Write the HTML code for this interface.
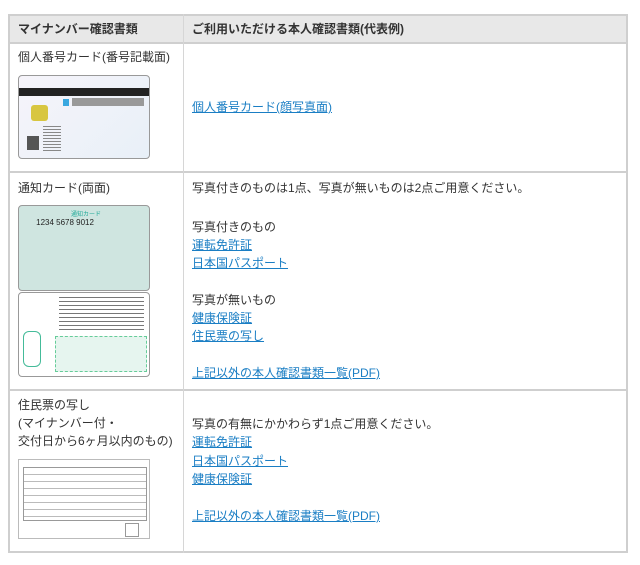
<!DOCTYPE html>
<html><head><meta charset="utf-8"><style>
body{margin:0;width:640px;height:565px;background:#fff;position:relative;font-family:"Liberation Sans","Noto Sans CJK JP",sans-serif;font-size:12px;color:#333;overflow:hidden}
.a{position:absolute}
.h{background:#cfcfcf}
.t{position:absolute;white-space:nowrap;line-height:18px}
a{color:#1a7ec4;text-decoration:underline}
.card{position:absolute;border:1px solid #999;border-radius:4px;box-sizing:border-box}
</style></head><body>
<div class="a" style="left:8px;top:14px;width:620px;height:29px;background:#e8e8e8"></div>
<div class="a h" style="left:8px;top:14px;width:620px;height:2px"></div>
<div class="a h" style="left:8px;top:42px;width:620px;height:2px"></div>
<div class="a h" style="left:8px;top:171px;width:620px;height:2px"></div>
<div class="a h" style="left:8px;top:389px;width:620px;height:2px"></div>
<div class="a h" style="left:8px;top:551px;width:620px;height:2px"></div>
<div class="a h" style="left:8px;top:14px;width:2px;height:539px"></div>
<div class="a h" style="left:626px;top:14px;width:2px;height:539px"></div>
<div class="a" style="left:183px;top:14px;width:1px;height:539px;background:#d6d6d6"></div>

<div class="t" style="left:18px;top:20px;font-weight:bold">マイナンバー確認書類</div>
<div class="t" style="left:192px;top:20px;font-weight:bold">ご利用いただける本人確認書類(代表例)</div>

<div class="t" style="left:18px;top:48px">個人番号カード(番号記載面)</div>
<div class="card" style="left:18px;top:75px;width:132px;height:84px;background:linear-gradient(135deg,#f6f4fa,#e8f0f8)">
 <div class="a" style="left:0;top:12px;width:130px;height:8px;background:#222"></div>
 <div class="a" style="left:12px;top:29px;width:17px;height:16px;background:#d8c640;border-radius:3px"></div>
 <div class="a" style="left:44px;top:23px;width:6px;height:7px;background:#3aa8e0"></div>
 <div class="a" style="left:53px;top:22px;width:72px;height:8px;background:#999"></div>
 <div class="a" style="left:8px;top:60px;width:12px;height:14px;background:#555"></div>
 <div class="a" style="left:24px;top:50px;width:18px;height:26px;background:repeating-linear-gradient(#888 0 1px,transparent 1px 3px)"></div>
</div>
<div class="t" style="left:192px;top:98px"><a>個人番号カード(顔写真面)</a></div>

<div class="t" style="left:18px;top:179px">通知カード(両面)</div>
<div class="card" style="left:18px;top:205px;width:132px;height:86px;background:#cfe5e0">
 <div class="t" style="left:52px;top:0;font-size:6px;color:#2a9">通知カード</div>
 <div class="t" style="left:6px;top:8px;font-size:8px;color:#222">&nbsp;&nbsp;&nbsp;&nbsp; 1234 5678 9012</div>
</div>
<div class="card" style="left:18px;top:292px;width:132px;height:85px;background:#fff">
 <div class="a" style="left:40px;top:4px;width:85px;height:36px;background:repeating-linear-gradient(#777 0 1px,transparent 1px 4px)"></div>
 <div class="a" style="left:4px;top:38px;width:16px;height:34px;border:1px solid #4b9;border-radius:6px"></div>
 <div class="a" style="left:36px;top:43px;width:90px;height:34px;border:1px dashed #6c9;background:#e6f5ef"></div>
</div>
<div class="t" style="left:192px;top:179px">写真付きのものは1点、写真が無いものは2点ご用意ください。</div>
<div class="t" style="left:192px;top:218px">写真付きのもの</div>
<div class="t" style="left:192px;top:236px"><a>運転免許証</a></div>
<div class="t" style="left:192px;top:254px"><a>日本国パスポート</a></div>
<div class="t" style="left:192px;top:291px">写真が無いもの</div>
<div class="t" style="left:192px;top:309px"><a>健康保険証</a></div>
<div class="t" style="left:192px;top:327px"><a>住民票の写し</a></div>
<div class="t" style="left:192px;top:364px"><a>上記以外の本人確認書類一覧(PDF)</a></div>

<div class="t" style="left:18px;top:396px">住民票の写し</div>
<div class="t" style="left:18px;top:414px">(マイナンバー付・</div>
<div class="t" style="left:18px;top:432px">交付日から6ヶ月以内のもの)</div>
<div class="a" style="left:18px;top:459px;width:132px;height:80px;border:1px solid #bbb;box-sizing:border-box;background:#fff">
 <div class="a" style="left:4px;top:7px;width:122px;height:52px;border:1px solid #999;background:repeating-linear-gradient(transparent 0 6px,#bbb 6px 7px)"></div>
 <div class="a" style="left:106px;top:63px;width:12px;height:12px;border:1px solid #999"></div>
</div>
<div class="t" style="left:192px;top:415px">写真の有無にかかわらず1点ご用意ください。</div>
<div class="t" style="left:192px;top:433px"><a>運転免許証</a></div>
<div class="t" style="left:192px;top:452px"><a>日本国パスポート</a></div>
<div class="t" style="left:192px;top:470px"><a>健康保険証</a></div>
<div class="t" style="left:192px;top:507px"><a>上記以外の本人確認書類一覧(PDF)</a></div>
</body></html>
